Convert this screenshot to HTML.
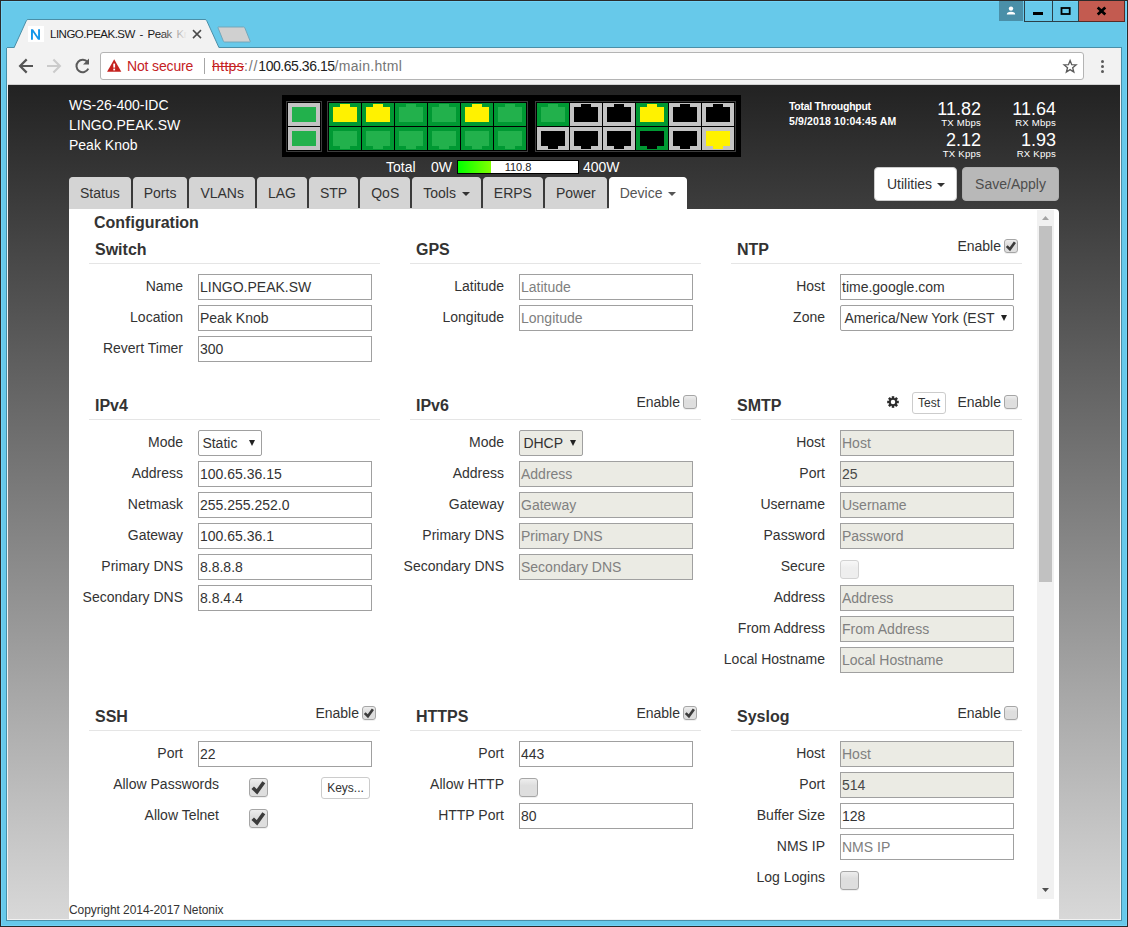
<!DOCTYPE html>
<html>
<head>
<meta charset="utf-8">
<title>LINGO.PEAK.SW - Peak Knob</title>
<style>
html,body{margin:0;padding:0;}
body{width:1128px;height:927px;position:relative;overflow:hidden;background:#67c9ea;font-family:"Liberation Sans",sans-serif;font-size:14px;color:#333;line-height:20px;}
.abs{position:absolute;}
/* ---------- window frame ---------- */
#frame{position:absolute;left:0;top:0;width:1126px;height:925px;border:1px solid #2a2a2a;box-shadow:inset 0 0 0 1px #72d3f7;}
#edgeL{position:absolute;left:6px;top:48px;width:1px;height:872px;background:#4690aa;}
#edgeR{position:absolute;left:1121px;top:48px;width:1px;height:873px;background:#4a8fa8;}
#edgeB{position:absolute;left:6px;top:920px;width:1116px;height:1px;background:#4a8fa8;}
#lineL{position:absolute;left:7px;top:48px;width:1px;height:872px;background:#f2f2f2;}
#lineR{position:absolute;left:1120px;top:48px;width:1px;height:872px;background:#f2f2f2;}
#lineB{position:absolute;left:7px;top:919px;width:1114px;height:1px;background:#f2f2f2;}
/* caption buttons */
.cap{position:absolute;top:1px;height:20px;}
#cUser{left:999px;width:24px;background:#4a8fa8;height:20px;}
#cMin{left:1024px;width:27px;border:1px solid #2b3f48;border-top:none;}
#cMax{left:1052px;width:26px;border:1px solid #2b3f48;border-top:none;border-left:none;}
#cClose{left:1079px;width:45px;background:#c35b50;border-bottom:1px solid #5a2a25;border-right:1px solid #5a2a25;}
/* ---------- tab strip ---------- */
#tabstrip{position:absolute;left:0;top:0;width:1128px;height:48px;}
#tabtitle{position:absolute;left:50px;top:25px;width:137px;height:18px;font-size:11.5px;line-height:18px;color:#1a1a1a;white-space:nowrap;overflow:hidden;letter-spacing:-0.5px;word-spacing:2px;}
#tabfade{position:absolute;left:160px;top:25px;width:27px;height:18px;background:linear-gradient(90deg,rgba(242,242,242,0),#f2f2f2);}
/* ---------- toolbar ---------- */
#toolbar{position:absolute;left:7px;top:48px;width:1114px;height:37px;background:#f2f2f2;}
#toolbarline{position:absolute;left:7px;top:84px;width:1114px;height:1px;background:#d0d0d0;}
#omni{position:absolute;left:100px;top:52px;width:982px;height:26px;border:1px solid #b4b4b4;border-radius:3px;background:#fff;}
#omnitext{position:absolute;left:127px;top:56px;height:20px;line-height:20px;font-size:14px;white-space:nowrap;}
/* ---------- page ---------- */
#page{position:absolute;left:8px;top:85px;width:1112px;height:834px;overflow:hidden;background:linear-gradient(180deg,#222222 0px,#d8d8d8 834px);}
#page .w{color:#fff;}

.caret{display:inline-block;width:0;height:0;margin-left:2px;vertical-align:middle;border-top:4px solid;border-right:4px solid transparent;border-left:4px solid transparent;}
.tab{display:inline-block;vertical-align:top;font-size:14px;line-height:20px;padding:5px 10px;border:1px solid #d4d4d4;border-bottom:none;background:#d4d4d4;color:#333;border-radius:4px 4px 0 0;margin-right:2px;height:21px;}
.tab.act{background:#fff;border-color:#fff;color:#555;}
.ttl{font-size:16px;font-weight:bold;line-height:20px;white-space:nowrap;color:#333;}
.lb{text-align:right;white-space:nowrap;line-height:20px;color:#333;}
.in{width:170px;height:24px;border:1px solid #a0a0a0;background:#fff;padding:0 1px;line-height:24px;white-space:nowrap;overflow:hidden;color:#333;}
.in.dis{background:#ebebe4;color:#484848;}
.ph{color:#808080;}
.sel{height:24px;border:1px solid #a0a0a0;border-radius:2px;background:#fff;padding:0;line-height:24px;white-space:nowrap;overflow:hidden;color:#333;text-indent:3.4px;}
.sel.dis{background:#ebebe4;}
.arr{position:absolute;right:6px;top:9.2px;width:0;height:0;border-top:6px solid #222;border-left:3.5px solid transparent;border-right:3.5px solid transparent;}
.cb{border:1px solid #a6a6a6;border-radius:3px;background:linear-gradient(180deg,#eeeeee 0%,#dedede 38%,#dedede 100%);box-shadow:0 1px 0 rgba(0,0,0,0.06);}
.cb.cbd{border-color:#d2d2d2;background:linear-gradient(180deg,#f8f8f8 0%,#eeeeee 40%,#eeeeee 100%);box-shadow:none;}
.btnx{border:1px solid #ccc;border-radius:3px;background:#fff;font-size:12px;text-align:center;color:#333;white-space:nowrap;}
</style>
</head>
<body>
<div id="frame"></div>
<!-- TABSTRIP -->
<div id="tabstrip">
<svg class="abs" style="left:0;top:0" width="1128" height="49" viewBox="0 0 1128 49">
  <rect x="7" y="47" width="1115" height="1" fill="#4a8fa8"/>
  <path d="M13.4 47.5 L14.4 47 L26.4 20.6 Q26.9 19.5 28.1 19.5 L205 19.5 Q206.2 19.5 206.7 20.6 L218.7 47 L219.7 47.5 Z" fill="#f2f2f2" stroke="#4a8fa8" stroke-width="1"/>
  <rect x="14.6" y="47" width="204" height="2" fill="#f2f2f2"/>
  <path d="M218.6 27 L243.6 27 Q244.4 27 244.8 27.8 L250.2 41.2 Q250.5 42 249.6 42 L224.6 42 Q223.8 42 223.4 41.2 L218 27.8 Q217.7 27 218.6 27 Z" fill="#d0d0d0" stroke="#6fa3b6" stroke-width="0.9"/>
  <rect x="28" y="26" width="16" height="16" fill="#ffffff"/>
  <path d="M31 39.8 V29.2 H33 L38.1 36.7 V29.2 H40 V39.8 H38 L32.9 32.3 V39.8 Z" fill="#1196ea"/>
  <path d="M193 30.1 L201 38.1 M201 30.1 L193 38.1" stroke="#4a4a4a" stroke-width="1.5" fill="none"/>
</svg>
<div id="tabtitle">LINGO.PEAK.SW - Peak Knob</div>
<div id="tabfade"></div>
<div class="cap" id="cUser"></div>
<div class="cap" id="cMin"></div>
<div class="cap" id="cMax"></div>
<div class="cap" id="cClose"></div>
<svg class="abs" style="left:999px;top:1px" width="126" height="21" viewBox="0 0 126 21">
  <circle cx="12" cy="7.6" r="2.2" fill="#fff"/>
  <path d="M7.8 13.6 Q7.8 10.8 12 10.8 Q16.2 10.8 16.2 13.6 Z" fill="#fff"/>
  <rect x="34" y="11" width="10" height="3" fill="#000"/>
  <rect x="62.5" y="7" width="8.2" height="6" fill="none" stroke="#000" stroke-width="1.8"/>
  <path d="M98.7 6.4 L106.3 13.4 M106.3 6.4 L98.7 13.4" stroke="#000" stroke-width="2.7" fill="none"/>
</svg>
</div>
<!-- TOOLBAR -->
<div id="toolbar"></div>
<div id="toolbarline"></div>
<div id="edgeL"></div><div id="edgeR"></div><div id="edgeB"></div>
<div id="lineL"></div><div id="lineR"></div><div id="lineB"></div>
<svg class="abs" style="left:8px;top:48px" width="92" height="37" viewBox="0 0 92 37">
  <path d="M25 18 H13 M18.7 11.4 L12.1 18 L18.7 24.6" stroke="#555" stroke-width="2.2" fill="none"/>
  <path d="M39 18 H51 M45.4 11.5 L51.9 18 L45.4 24.5" stroke="#cbcbcb" stroke-width="2.1" fill="none"/>
  <path d="M79.6 14.2 A6.2 6.2 0 1 0 80.3 20.6" stroke="#5a5a5a" stroke-width="2" fill="none"/>
  <path d="M81 10.5 V16.5 H75 Z" fill="#5a5a5a"/>
</svg>
<div id="omni"></div>
<svg class="abs" style="left:106px;top:58px" width="18" height="16" viewBox="0 0 18 16">
  <path d="M8.2 1.2 L15.3 13.8 H1.1 Z" fill="#c5221f"/>
  <rect x="7.3" y="5.6" width="1.8" height="4" fill="#fff"/>
  <rect x="7.3" y="10.6" width="1.8" height="1.8" fill="#fff"/>
</svg>
<div id="omnitext"><span style="color:#c5221f;letter-spacing:-0.15px">Not secure</span></div>
<div class="abs" style="left:204px;top:58px;width:1px;height:16px;background:#a6a6a6"></div>
<div class="abs" style="left:212px;top:56px;height:20px;line-height:20px;font-size:14px;white-space:nowrap;color:#767676"><span style="color:#c5221f;text-decoration:line-through;letter-spacing:0.35px">https</span><span style="letter-spacing:0.85px">://</span><span style="color:#222;letter-spacing:-0.46px">100.65.36.15</span><span style="letter-spacing:0.3px">/main.html</span></div>
<svg class="abs" style="left:1060px;top:56px" width="56" height="22" viewBox="0 0 56 22">
  <path transform="translate(10.1 10.4) scale(0.86) translate(-10 -10)" d="M10 3.2 L11.9 8 L17 8.3 L13 11.6 L14.3 16.6 L10 13.8 L5.7 16.6 L7 11.6 L3 8.3 L8.1 8 Z" fill="none" stroke="#5a5a5a" stroke-width="1.55" stroke-linejoin="miter"/>
  <circle cx="42.5" cy="5.5" r="1.5" fill="#5a5a5a"/><circle cx="42.5" cy="10.5" r="1.5" fill="#5a5a5a"/><circle cx="42.5" cy="15.5" r="1.5" fill="#5a5a5a"/>
</svg>
<!-- PAGE -->
<div id="page">
<div id="pg" style="position:absolute;left:-8px;top:-85px;width:1128px;height:927px;">
<div class="abs w" style="left:69px;top:95px;white-space:nowrap">WS-26-400-IDC</div>
<div class="abs w" style="left:69px;top:115px;white-space:nowrap">LINGO.PEAK.SW</div>
<div class="abs w" style="left:69px;top:135px;white-space:nowrap">Peak Knob</div>
<svg class="abs" style="left:282px;top:95px" width="460" height="62" viewBox="282 95 460 62" shape-rendering="crispEdges"><rect x="282" y="95" width="459" height="62" fill="#000"/><rect x="286.5" y="101.5" width="35" height="50" fill="none" stroke="#3c3c3c"/><rect x="327.5" y="101.5" width="200" height="50" fill="none" stroke="#3c3c3c"/><rect x="535.5" y="101.5" width="200" height="50" fill="none" stroke="#3c3c3c"/><rect x="288" y="103" width="32" height="23" fill="#c3c3c3"/><rect x="292" y="107" width="24" height="15" fill="#22b14c"/><rect x="288" y="127" width="32" height="23" fill="#c3c3c3"/><rect x="292" y="131" width="24" height="15" fill="#22b14c"/><rect x="329" y="103" width="32" height="23" fill="#009933"/><path d="M333 107 H340 V104 H350 V107 H357 V122 H333 Z" fill="#fff200"/><rect x="329" y="127" width="32" height="23" fill="#009933"/><path d="M333 131 H357 V146 H350 V149 H340 V146 H333 Z" fill="#22b14c"/><rect x="362" y="103" width="32" height="23" fill="#009933"/><path d="M366 107 H373 V104 H383 V107 H390 V122 H366 Z" fill="#fff200"/><rect x="362" y="127" width="32" height="23" fill="#009933"/><path d="M366 131 H390 V146 H383 V149 H373 V146 H366 Z" fill="#22b14c"/><rect x="395" y="103" width="32" height="23" fill="#009933"/><path d="M399 107 H406 V104 H416 V107 H423 V122 H399 Z" fill="#22b14c"/><rect x="395" y="127" width="32" height="23" fill="#009933"/><path d="M399 131 H423 V146 H416 V149 H406 V146 H399 Z" fill="#22b14c"/><rect x="428" y="103" width="32" height="23" fill="#009933"/><path d="M432 107 H439 V104 H449 V107 H456 V122 H432 Z" fill="#22b14c"/><rect x="428" y="127" width="32" height="23" fill="#009933"/><path d="M432 131 H456 V146 H449 V149 H439 V146 H432 Z" fill="#22b14c"/><rect x="461" y="103" width="32" height="23" fill="#009933"/><path d="M465 107 H472 V104 H482 V107 H489 V122 H465 Z" fill="#fff200"/><rect x="461" y="127" width="32" height="23" fill="#009933"/><path d="M465 131 H489 V146 H482 V149 H472 V146 H465 Z" fill="#22b14c"/><rect x="494" y="103" width="32" height="23" fill="#009933"/><path d="M498 107 H505 V104 H515 V107 H522 V122 H498 Z" fill="#22b14c"/><rect x="494" y="127" width="32" height="23" fill="#009933"/><path d="M498 131 H522 V146 H515 V149 H505 V146 H498 Z" fill="#22b14c"/><rect x="537" y="103" width="32" height="23" fill="#009933"/><path d="M541 107 H548 V104 H558 V107 H565 V122 H541 Z" fill="#22b14c"/><rect x="537" y="127" width="32" height="23" fill="#c3c3c3"/><path d="M541 131 H565 V146 H558 V149 H548 V146 H541 Z" fill="#000"/><rect x="570" y="103" width="32" height="23" fill="#c3c3c3"/><path d="M574 107 H581 V104 H591 V107 H598 V122 H574 Z" fill="#000"/><rect x="570" y="127" width="32" height="23" fill="#c3c3c3"/><path d="M574 131 H598 V146 H591 V149 H581 V146 H574 Z" fill="#000"/><rect x="603" y="103" width="32" height="23" fill="#c3c3c3"/><path d="M607 107 H614 V104 H624 V107 H631 V122 H607 Z" fill="#000"/><rect x="603" y="127" width="32" height="23" fill="#c3c3c3"/><path d="M607 131 H631 V146 H624 V149 H614 V146 H607 Z" fill="#000"/><rect x="636" y="103" width="32" height="23" fill="#009933"/><path d="M640 107 H647 V104 H657 V107 H664 V122 H640 Z" fill="#fff200"/><rect x="636" y="127" width="32" height="23" fill="#009933"/><path d="M640 131 H664 V146 H657 V149 H647 V146 H640 Z" fill="#000"/><rect x="669" y="103" width="32" height="23" fill="#c3c3c3"/><path d="M673 107 H680 V104 H690 V107 H697 V122 H673 Z" fill="#000"/><rect x="669" y="127" width="32" height="23" fill="#c3c3c3"/><path d="M673 131 H697 V146 H690 V149 H680 V146 H673 Z" fill="#000"/><rect x="702" y="103" width="32" height="23" fill="#c3c3c3"/><path d="M706 107 H713 V104 H723 V107 H730 V122 H706 Z" fill="#000"/><rect x="702" y="127" width="32" height="23" fill="#c3c3c3"/><path d="M706 131 H730 V146 H723 V149 H713 V146 H706 Z" fill="#fff200"/></svg>
<div class="abs w" style="left:386px;top:157px;white-space:nowrap">Total</div>
<div class="abs w" style="left:431px;top:157px;white-space:nowrap">0W</div>
<div class="abs" style="left:457px;top:160px;width:120px;height:12px;border:1px solid #000;background:#fff"></div>
<div class="abs" style="left:458px;top:161px;width:33px;height:12px;background:linear-gradient(90deg,#00ff00,#80ff00)"></div>
<div class="abs" style="left:458px;top:161px;width:120px;height:12px;line-height:12px;font-size:11px;text-align:center;color:#222">110.8</div>
<div class="abs w" style="left:583px;top:157px;white-space:nowrap">400W</div>
<div class="abs w" style="left:789px;top:99px;font-size:10.5px;font-weight:bold;line-height:15px;white-space:nowrap"><span id="tt1" style="letter-spacing:-0.27px">Total Throughput</span><br><span id="tt2" style="letter-spacing:0.13px">5/9/2018 10:04:45 AM</span></div>
<div class="abs w" style="left:881px;width:100px;top:100px;text-align:right;font-size:18px;line-height:18px;white-space:nowrap">11.82</div><div class="abs w" style="left:881px;width:100px;top:117px;text-align:right;font-size:9.6px;letter-spacing:0.2px;line-height:12px;white-space:nowrap">TX Mbps</div>
<div class="abs w" style="left:956px;width:100px;top:100px;text-align:right;font-size:18px;line-height:18px;white-space:nowrap">11.64</div><div class="abs w" style="left:956px;width:100px;top:117px;text-align:right;font-size:9.6px;letter-spacing:0.2px;line-height:12px;white-space:nowrap">RX Mbps</div>
<div class="abs w" style="left:881px;width:100px;top:131px;text-align:right;font-size:18px;line-height:18px;white-space:nowrap">2.12</div><div class="abs w" style="left:881px;width:100px;top:148px;text-align:right;font-size:9.6px;letter-spacing:0.2px;line-height:12px;white-space:nowrap">TX Kpps</div>
<div class="abs w" style="left:956px;width:100px;top:131px;text-align:right;font-size:18px;line-height:18px;white-space:nowrap">1.93</div><div class="abs w" style="left:956px;width:100px;top:148px;text-align:right;font-size:9.6px;letter-spacing:0.2px;line-height:12px;white-space:nowrap">RX Kpps</div>
<div class="abs" style="left:874px;top:167px;width:81px;height:32px;border:1px solid #ccc;border-radius:4px;background:#fff;color:#333;line-height:32px;text-align:left;text-indent:12px;white-space:nowrap">Utilities <span class="caret" style="margin-left:1px"></span></div>
<div class="abs" style="left:962px;top:167px;width:95px;height:32px;border:1px solid #b0b0b0;border-radius:4px;background:#b8b8b8;color:#4d4d4d;line-height:32px;text-align:center;white-space:nowrap">Save/Apply</div>
<div class="abs" id="tabs" style="left:69px;top:177px;height:32px;white-space:nowrap;font-size:0">
<div class="tab">Status</div>
<div class="tab">Ports</div>
<div class="tab">VLANs</div>
<div class="tab">LAG</div>
<div class="tab">STP</div>
<div class="tab">QoS</div>
<div class="tab">Tools <span class="caret"></span></div>
<div class="tab">ERPS</div>
<div class="tab">Power</div>
<div class="tab act">Device <span class="caret"></span></div>
</div>
<div class="abs" style="left:69px;top:209px;width:990px;height:719px;background:#fff;border-top-right-radius:4px"></div>
<div class="abs" style="left:69px;top:208px;width:540px;height:1px;background:#d4d4d4"></div>
<div class="abs" style="left:1037px;top:210px;width:17px;height:689px;background:#f1f1f1"></div>
<div class="abs" style="left:1039px;top:226px;width:13px;height:356px;background:#c1c1c1"></div>
<svg class="abs" style="left:1037px;top:210px" width="17" height="17" viewBox="0 0 17 17"><path d="M5 10 L8.5 6 L12 10 Z" fill="#a3a3a3"/></svg>
<svg class="abs" style="left:1037px;top:882px" width="17" height="17" viewBox="0 0 17 17"><path d="M5 6 L12 6 L8.5 10 Z" fill="#505050"/></svg>
<div class="abs" style="left:94px;top:213px;font-size:16px;font-weight:bold;white-space:nowrap">Configuration</div>
<div class="abs ttl" style="left:95px;top:240px">Switch</div><div class="abs" style="left:89px;top:263px;width:291px;height:1px;background:#e5e5e5"></div>
<div class="abs lb" style="left:-11px;width:194px;top:276px">Name</div>
<div class="abs in" style="left:198px;top:274px">LINGO.PEAK.SW</div>
<div class="abs lb" style="left:-11px;width:194px;top:307px">Location</div>
<div class="abs in" style="left:198px;top:305px">Peak Knob</div>
<div class="abs lb" style="left:-11px;width:194px;top:338px">Revert Timer</div>
<div class="abs in" style="left:198px;top:336px">300</div>
<div class="abs ttl" style="left:416px;top:240px">GPS</div><div class="abs" style="left:410px;top:263px;width:291px;height:1px;background:#e5e5e5"></div>
<div class="abs lb" style="left:310px;width:194px;top:276px">Latitude</div>
<div class="abs in" style="left:519px;top:274px"><span class="ph">Latitude</span></div>
<div class="abs lb" style="left:310px;width:194px;top:307px">Longitude</div>
<div class="abs in" style="left:519px;top:305px"><span class="ph">Longitude</span></div>
<div class="abs ttl" style="left:737px;top:240px">NTP</div><div class="abs" style="left:731px;top:263px;width:291px;height:1px;background:#e5e5e5"></div><div class="abs" style="left:861px;width:140px;text-align:right;top:236px;white-space:nowrap">Enable</div><div class="abs cb cbc" style="left:1004px;top:239px;width:12px;height:12px"></div><svg class="abs" style="left:1004px;top:239px" width="14" height="14" viewBox="0 0 19 19"><path d="M3.7 9.7 L8 13.8 L14.8 4.3" fill="none" stroke="#3c3c3c" stroke-width="3.6" stroke-linejoin="miter"/></svg>
<div class="abs lb" style="left:631px;width:194px;top:276px">Host</div>
<div class="abs in" style="left:840px;top:274px">time.google.com</div>
<div class="abs lb" style="left:631px;width:194px;top:307px">Zone</div>
<div class="abs sel" style="left:840px;top:305px;width:172px">America/New York (EST<span class="arr"></span></div>
<div class="abs ttl" style="left:95px;top:396px">IPv4</div><div class="abs" style="left:89px;top:419px;width:291px;height:1px;background:#e5e5e5"></div>
<div class="abs lb" style="left:-11px;width:194px;top:432px">Mode</div>
<div class="abs sel" style="left:198px;top:430px;width:62px">Static<span class="arr"></span></div>
<div class="abs lb" style="left:-11px;width:194px;top:463px">Address</div>
<div class="abs in" style="left:198px;top:461px">100.65.36.15</div>
<div class="abs lb" style="left:-11px;width:194px;top:494px">Netmask</div>
<div class="abs in" style="left:198px;top:492px">255.255.252.0</div>
<div class="abs lb" style="left:-11px;width:194px;top:525px">Gateway</div>
<div class="abs in" style="left:198px;top:523px">100.65.36.1</div>
<div class="abs lb" style="left:-11px;width:194px;top:556px">Primary DNS</div>
<div class="abs in" style="left:198px;top:554px">8.8.8.8</div>
<div class="abs lb" style="left:-11px;width:194px;top:587px">Secondary DNS</div>
<div class="abs in" style="left:198px;top:585px">8.8.4.4</div>
<div class="abs ttl" style="left:416px;top:396px">IPv6</div><div class="abs" style="left:410px;top:419px;width:291px;height:1px;background:#e5e5e5"></div><div class="abs" style="left:540px;width:140px;text-align:right;top:392px;white-space:nowrap">Enable</div><div class="abs cb" style="left:683px;top:395px;width:12px;height:12px"></div>
<div class="abs lb" style="left:310px;width:194px;top:432px">Mode</div>
<div class="abs sel dis" style="left:519px;top:430px;width:62px">DHCP<span class="arr"></span></div>
<div class="abs lb" style="left:310px;width:194px;top:463px">Address</div>
<div class="abs in dis" style="left:519px;top:461px"><span class="ph">Address</span></div>
<div class="abs lb" style="left:310px;width:194px;top:494px">Gateway</div>
<div class="abs in dis" style="left:519px;top:492px"><span class="ph">Gateway</span></div>
<div class="abs lb" style="left:310px;width:194px;top:525px">Primary DNS</div>
<div class="abs in dis" style="left:519px;top:523px"><span class="ph">Primary DNS</span></div>
<div class="abs lb" style="left:310px;width:194px;top:556px">Secondary DNS</div>
<div class="abs in dis" style="left:519px;top:554px"><span class="ph">Secondary DNS</span></div>
<div class="abs ttl" style="left:737px;top:396px">SMTP</div><div class="abs" style="left:731px;top:419px;width:291px;height:1px;background:#e5e5e5"></div><div class="abs" style="left:861px;width:140px;text-align:right;top:392px;white-space:nowrap">Enable</div><div class="abs cb" style="left:1004px;top:395px;width:12px;height:12px"></div>
<svg class="abs" style="left:887px;top:396px" width="12" height="12" viewBox="-6 -6 12 12"><g fill="#2b2b2b"><rect x="-1.25" y="-5.8" width="2.5" height="11.6" transform="rotate(0)"/><rect x="-1.25" y="-5.8" width="2.5" height="11.6" transform="rotate(45)"/><rect x="-1.25" y="-5.8" width="2.5" height="11.6" transform="rotate(90)"/><rect x="-1.25" y="-5.8" width="2.5" height="11.6" transform="rotate(135)"/><circle r="4.1"/></g><circle r="2.25" fill="#fff"/></svg>
<div class="abs btnx" style="left:912px;top:392px;width:32px;height:20px;line-height:20px">Test</div>
<div class="abs lb" style="left:631px;width:194px;top:432px">Host</div>
<div class="abs in dis" style="left:840px;top:430px"><span class="ph">Host</span></div>
<div class="abs lb" style="left:631px;width:194px;top:463px">Port</div>
<div class="abs in dis" style="left:840px;top:461px">25</div>
<div class="abs lb" style="left:631px;width:194px;top:494px">Username</div>
<div class="abs in dis" style="left:840px;top:492px"><span class="ph">Username</span></div>
<div class="abs lb" style="left:631px;width:194px;top:525px">Password</div>
<div class="abs in dis" style="left:840px;top:523px"><span class="ph">Password</span></div>
<div class="abs lb" style="left:631px;width:194px;top:556px">Secure</div>
<div class="abs cb cbd" style="left:840px;top:560px;width:17px;height:17px"></div>
<div class="abs lb" style="left:631px;width:194px;top:587px">Address</div>
<div class="abs in dis" style="left:840px;top:585px"><span class="ph">Address</span></div>
<div class="abs lb" style="left:631px;width:194px;top:618px">From Address</div>
<div class="abs in dis" style="left:840px;top:616px"><span class="ph">From Address</span></div>
<div class="abs lb" style="left:631px;width:194px;top:649px">Local Hostname</div>
<div class="abs in dis" style="left:840px;top:647px"><span class="ph">Local Hostname</span></div>
<div class="abs ttl" style="left:95px;top:707px">SSH</div><div class="abs" style="left:89px;top:730px;width:291px;height:1px;background:#e5e5e5"></div><div class="abs" style="left:219px;width:140px;text-align:right;top:703px;white-space:nowrap">Enable</div><div class="abs cb cbc" style="left:362px;top:706px;width:12px;height:12px"></div><svg class="abs" style="left:362px;top:706px" width="14" height="14" viewBox="0 0 19 19"><path d="M3.7 9.7 L8 13.8 L14.8 4.3" fill="none" stroke="#3c3c3c" stroke-width="3.6" stroke-linejoin="miter"/></svg>
<div class="abs lb" style="left:-11px;width:194px;top:743px">Port</div>
<div class="abs in" style="left:198px;top:741px">22</div>
<div class="abs lb" style="left:40px;width:179px;top:774px">Allow Passwords</div>
<div class="abs cb cbc" style="left:249px;top:778px;width:17px;height:17px"></div><svg class="abs" style="left:249px;top:778px" width="19" height="19" viewBox="0 0 19 19"><path d="M3.7 9.7 L8 13.8 L14.8 4.3" fill="none" stroke="#3c3c3c" stroke-width="3.6" stroke-linejoin="miter"/></svg>
<div class="abs lb" style="left:40px;width:179px;top:805px">Allow Telnet</div>
<div class="abs cb cbc" style="left:249px;top:809px;width:17px;height:17px"></div><svg class="abs" style="left:249px;top:809px" width="19" height="19" viewBox="0 0 19 19"><path d="M3.7 9.7 L8 13.8 L14.8 4.3" fill="none" stroke="#3c3c3c" stroke-width="3.6" stroke-linejoin="miter"/></svg>
<div class="abs btnx" style="left:321px;top:777px;width:47px;height:20px;line-height:20px">Keys...</div>
<div class="abs ttl" style="left:416px;top:707px">HTTPS</div><div class="abs" style="left:410px;top:730px;width:291px;height:1px;background:#e5e5e5"></div><div class="abs" style="left:540px;width:140px;text-align:right;top:703px;white-space:nowrap">Enable</div><div class="abs cb cbc" style="left:683px;top:706px;width:12px;height:12px"></div><svg class="abs" style="left:683px;top:706px" width="14" height="14" viewBox="0 0 19 19"><path d="M3.7 9.7 L8 13.8 L14.8 4.3" fill="none" stroke="#3c3c3c" stroke-width="3.6" stroke-linejoin="miter"/></svg>
<div class="abs lb" style="left:310px;width:194px;top:743px">Port</div>
<div class="abs in" style="left:519px;top:741px">443</div>
<div class="abs lb" style="left:310px;width:194px;top:774px">Allow HTTP</div>
<div class="abs cb" style="left:519px;top:778px;width:17px;height:17px"></div>
<div class="abs lb" style="left:310px;width:194px;top:805px">HTTP Port</div>
<div class="abs in" style="left:519px;top:803px">80</div>
<div class="abs ttl" style="left:737px;top:707px">Syslog</div><div class="abs" style="left:731px;top:730px;width:291px;height:1px;background:#e5e5e5"></div><div class="abs" style="left:861px;width:140px;text-align:right;top:703px;white-space:nowrap">Enable</div><div class="abs cb" style="left:1004px;top:706px;width:12px;height:12px"></div>
<div class="abs lb" style="left:631px;width:194px;top:743px">Host</div>
<div class="abs in dis" style="left:840px;top:741px"><span class="ph">Host</span></div>
<div class="abs lb" style="left:631px;width:194px;top:774px">Port</div>
<div class="abs in dis" style="left:840px;top:772px">514</div>
<div class="abs lb" style="left:631px;width:194px;top:805px">Buffer Size</div>
<div class="abs in" style="left:840px;top:803px">128</div>
<div class="abs lb" style="left:631px;width:194px;top:836px">NMS IP</div>
<div class="abs in" style="left:840px;top:834px"><span class="ph">NMS IP</span></div>
<div class="abs lb" style="left:631px;width:194px;top:867px">Log Logins</div>
<div class="abs cb" style="left:840px;top:871px;width:17px;height:17px"></div>
<div class="abs" style="left:69px;top:901px;font-size:12px;line-height:18px;color:#333;white-space:nowrap;letter-spacing:-0.06px">Copyright 2014-2017 Netonix</div>
</div>
</div>
</body>
</html>
